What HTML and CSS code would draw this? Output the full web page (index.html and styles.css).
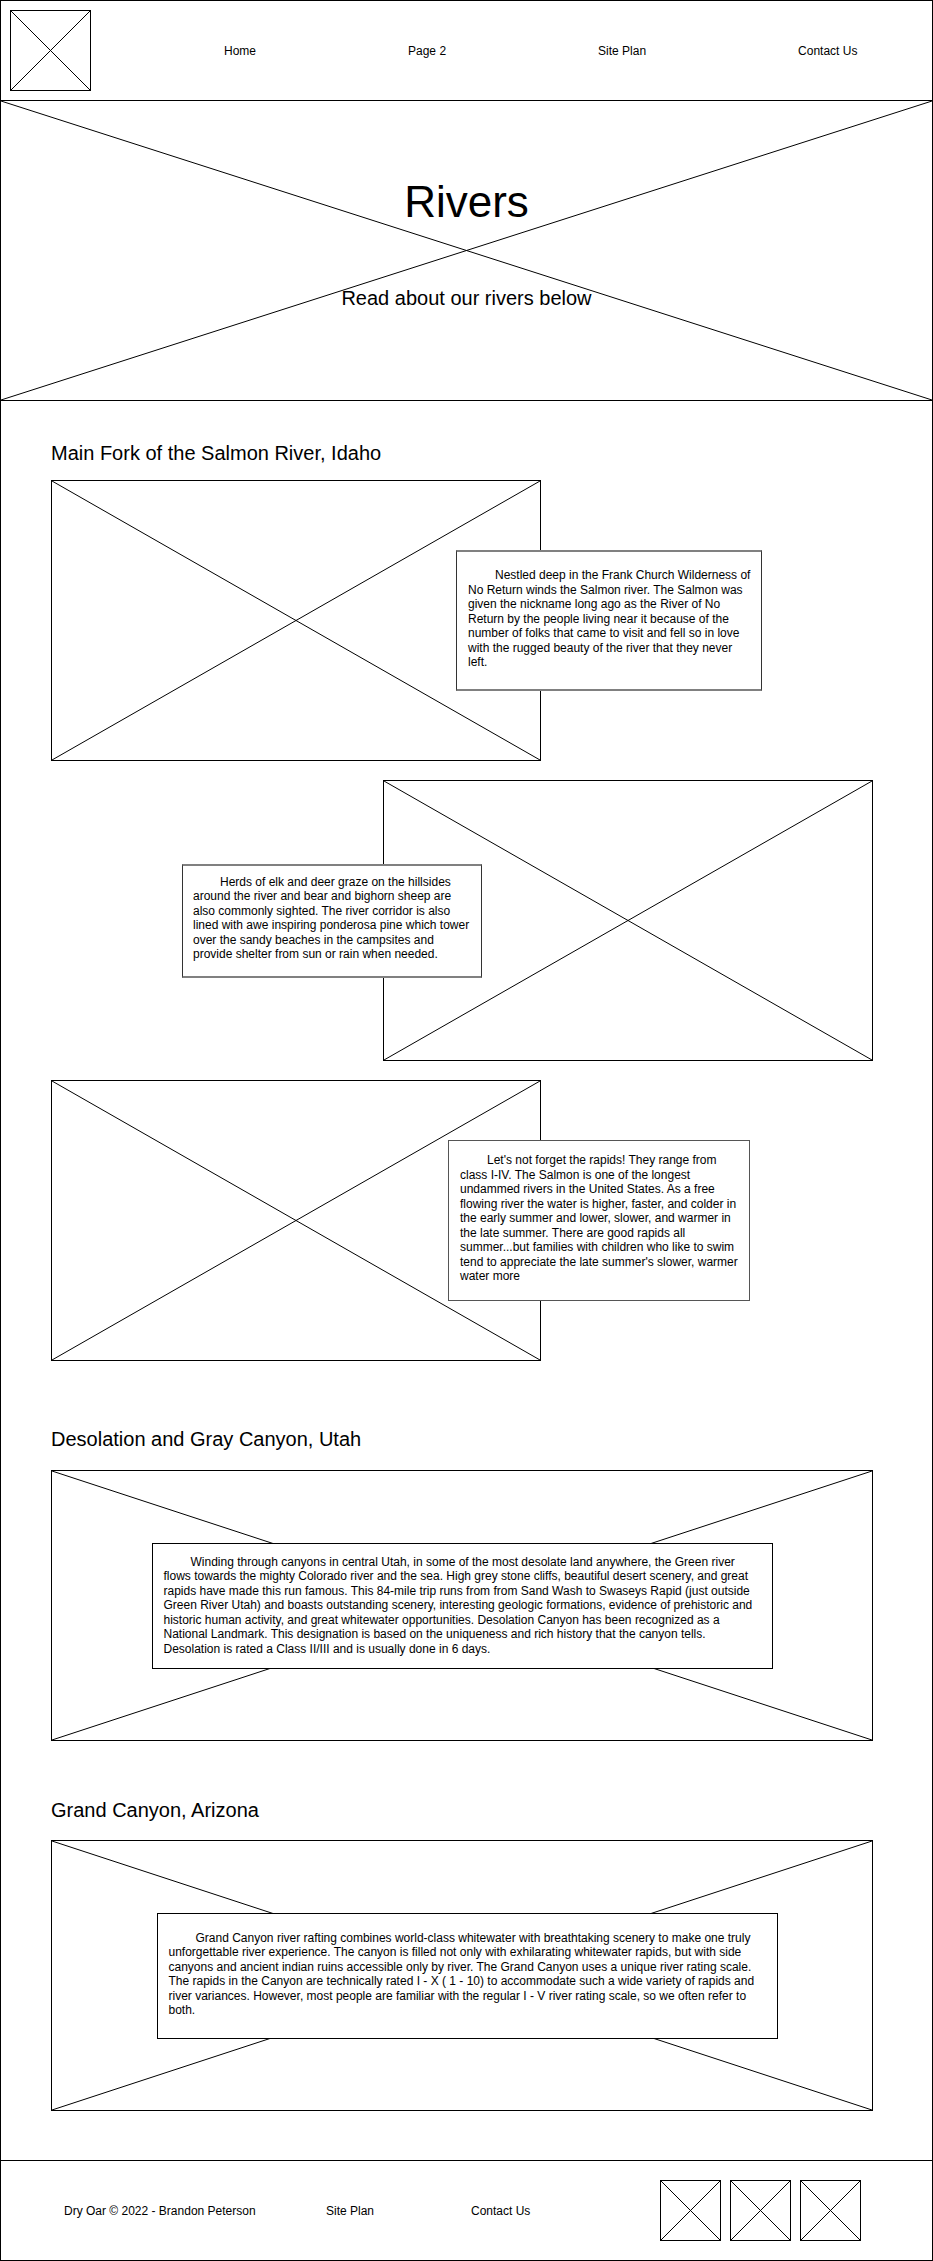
FILE: index.html
```html
<!DOCTYPE html>
<html lang="en">

<head>
  <meta charset="UTF-8">
  <title>Dry Oar - Rivers</title>
  <link rel="stylesheet" href="styles.css">
</head>

<body>
  <div class="page">

    <!-- header: logo + main menu -->
    <header class="site-header">
      <div class="ph logo">
        <svg class="x-lines" viewBox="0 0 100 100" preserveAspectRatio="none"><line x1="0" y1="0" x2="100" y2="100"/><line x1="100" y1="0" x2="0" y2="100"/></svg>
      </div>
      <nav class="main-nav">
        <a href="#">Home</a>
        <a href="#">Page 2</a>
        <a href="#">Site Plan</a>
        <a href="#">Contact Us</a>
      </nav>
    </header>

    <!-- hero banner -->
    <section class="hero">
      <svg class="x-lines" viewBox="0 0 100 100" preserveAspectRatio="none"><line x1="0" y1="0" x2="100" y2="100"/><line x1="100" y1="0" x2="0" y2="100"/></svg>
      <h1>Rivers</h1>
      <p>Read about our rivers below</p>
    </section>

    <main class="content">

      <!-- Salmon river -->
      <section class="river river-salmon">
        <h2>Main Fork of the Salmon River, Idaho</h2>

        <div class="feature">
          <div class="ph photo">
            <svg class="x-lines" viewBox="0 0 100 100" preserveAspectRatio="none"><line x1="0" y1="0" x2="100" y2="100"/><line x1="100" y1="0" x2="0" y2="100"/></svg>
          </div>
          <div class="note note-soft note-1">
            <p>Nestled deep in the Frank Church Wilderness of No Return winds the Salmon river. The Salmon was given the nickname long ago as the River of No Return by the people living near it because of the number of folks that came to visit and fell so in love with the rugged beauty of the river that they never left.</p>
          </div>
        </div>

        <div class="feature feature-flip">
          <div class="note note-soft note-2">
            <p>Herds of elk and deer graze on the hillsides around the river and bear and bighorn sheep are also commonly sighted. The river corridor is also lined with awe inspiring ponderosa pine which tower over the sandy beaches in the campsites and provide shelter from sun or rain when needed.</p>
          </div>
          <div class="ph photo">
            <svg class="x-lines" viewBox="0 0 100 100" preserveAspectRatio="none"><line x1="0" y1="0" x2="100" y2="100"/><line x1="100" y1="0" x2="0" y2="100"/></svg>
          </div>
        </div>

        <div class="feature">
          <div class="ph photo">
            <svg class="x-lines" viewBox="0 0 100 100" preserveAspectRatio="none"><line x1="0" y1="0" x2="100" y2="100"/><line x1="100" y1="0" x2="0" y2="100"/></svg>
          </div>
          <div class="note note-grey note-3">
            <p>Let's not forget the rapids! They range from class I-IV. The Salmon is one of the longest undammed rivers in the United States. As a free flowing river the water is higher, faster, and colder in the early summer and lower, slower, and warmer in the late summer. There are good rapids all summer...but families with children who like to swim tend to appreciate the late summer's slower, warmer water more</p>
          </div>
        </div>
      </section>

      <!-- Green river -->
      <section class="river river-desolation">
        <h2>Desolation and Gray Canyon, Utah</h2>
        <div class="ph banner">
          <svg class="x-lines" viewBox="0 0 100 100" preserveAspectRatio="none"><line x1="0" y1="0" x2="100" y2="100"/><line x1="100" y1="0" x2="0" y2="100"/></svg>
          <div class="note note-wide note-4">
            <p>Winding through canyons in central Utah, in some of the most desolate land anywhere, the Green river flows towards the mighty Colorado river and the sea. High grey stone cliffs, beautiful desert scenery, and great rapids have made this run famous. This 84-mile trip runs from from Sand Wash to Swaseys Rapid (just outside Green River Utah) and boasts outstanding scenery, interesting geologic formations, evidence of prehistoric and historic human activity, and great whitewater opportunities. Desolation Canyon has been recognized as a National Landmark. This designation is based on the uniqueness and rich history that the canyon tells. Desolation is rated a Class II/III and is usually done in 6 days.</p>
          </div>
        </div>
      </section>

      <!-- Colorado river -->
      <section class="river river-grand">
        <h2>Grand Canyon, Arizona</h2>
        <div class="ph banner">
          <svg class="x-lines" viewBox="0 0 100 100" preserveAspectRatio="none"><line x1="0" y1="0" x2="100" y2="100"/><line x1="100" y1="0" x2="0" y2="100"/></svg>
          <div class="note note-wide note-5">
            <p>Grand Canyon river rafting combines world-class whitewater with breathtaking scenery to make one truly unforgettable river experience. The canyon is filled not only with exhilarating whitewater rapids, but with side canyons and ancient indian ruins accessible only by river. The Grand Canyon uses a unique river rating scale. The rapids in the Canyon are technically rated I - X ( 1 - 10) to accommodate such a wide variety of rapids and river variances. However, most people are familiar with the regular I - V river rating scale, so we often refer to both.</p>
          </div>
        </div>
      </section>

    </main>

    <!-- footer -->
    <footer class="site-footer">
      <span>Dry Oar &copy; 2022 - Brandon Peterson</span>
      <a href="#">Site Plan</a>
      <a href="#">Contact Us</a>
      <div class="social">
        <div class="ph icon">
          <svg class="x-lines" viewBox="0 0 100 100" preserveAspectRatio="none"><line x1="0" y1="0" x2="100" y2="100"/><line x1="100" y1="0" x2="0" y2="100"/></svg>
        </div>
        <div class="ph icon">
          <svg class="x-lines" viewBox="0 0 100 100" preserveAspectRatio="none"><line x1="0" y1="0" x2="100" y2="100"/><line x1="100" y1="0" x2="0" y2="100"/></svg>
        </div>
        <div class="ph icon">
          <svg class="x-lines" viewBox="0 0 100 100" preserveAspectRatio="none"><line x1="0" y1="0" x2="100" y2="100"/><line x1="100" y1="0" x2="0" y2="100"/></svg>
        </div>
      </div>
    </footer>

  </div>
</body>

</html>
```

FILE: styles.css
```css
/* base */
html,
body {
  margin: 0;
  padding: 0;
  background-color: white;
  color: black;
  font-family: "Liberation Sans", Arial, sans-serif;
}

.page {
  box-sizing: border-box;
  width: 933px;
  height: 2261px;
  border: 1px solid black;
  display: flex;
  flex-direction: column;
}

a {
  color: black;
  text-decoration: none;
}

/* image placeholder (box with an X) */
.ph {
  position: relative;
  box-sizing: border-box;
  border: 1px solid black;
  background-color: white;
}

.x-lines {
  position: absolute;
  top: 0;
  left: 0;
  width: 100%;
  height: 100%;
}

.x-lines line {
  stroke: black;
  stroke-width: 1;
  vector-effect: non-scaling-stroke;
}

/* header */
.site-header {
  display: flex;
  align-items: center;
  padding: 9px;
  border-bottom: 1px solid black;
}

.logo {
  width: 81px;
  height: 81px;
  flex-shrink: 0;
}

.main-nav {
  display: flex;
  gap: 152px;
  margin-left: 133px;
  font-size: 12px;
}

/* hero */
.hero {
  position: relative;
  box-sizing: border-box;
  height: 300px;
  padding-top: 76px;
  border-bottom: 1px solid black;
  text-align: center;
}

.hero h1 {
  position: relative;
  margin: 0;
  font-size: 44px;
  font-weight: normal;
}

.hero p {
  position: relative;
  margin: 60px 0 0;
  font-size: 20px;
}

/* rivers */
.content {
  padding: 41px 59px 0 50px;
  flex: 1;
}

.river h2 {
  margin: 0 0 15px;
  font-size: 20px;
  font-weight: normal;
  line-height: 23px;
}

.river-desolation {
  margin-top: 67px;
}

.river-desolation h2 {
  margin-bottom: 19px;
}

.river-grand {
  margin-top: 58px;
}

.river-grand h2 {
  margin-bottom: 18px;
}

.feature {
  display: flex;
  align-items: center;
  margin-bottom: 19px;
}

.feature-flip {
  justify-content: flex-end;
}

.photo {
  width: 490px;
  height: 281px;
  flex-shrink: 0;
}

.banner {
  height: 271px;
  display: flex;
  align-items: center;
  justify-content: center;
}

/* text boxes over the pictures */
.note {
  position: relative;
  z-index: 1;
  box-sizing: border-box;
  flex-shrink: 0;
  border: 1px solid black;
  background-color: white;
  padding: 0 12px 0 11px;
  font-size: 12px;
  line-height: 14.5px;
}

.note p {
  margin: 0;
  text-indent: 27px;
}

.note-soft {
  border-color: #333;
  border-top: 2px solid #808080;
  border-bottom: 2px solid #808080;
}

.note-grey {
  border: 1px solid #555;
}

.note-1 {
  width: 306px;
  height: 141px;
  margin-left: -85px;
  padding-top: 16px;
  padding-right: 9px;
}

.note-2 {
  width: 300px;
  height: 114px;
  margin-right: -99px;
  padding-top: 9px;
  padding-left: 10px;
  padding-right: 9px;
}

.note-3 {
  width: 302px;
  height: 161px;
  margin-left: -93px;
  padding-top: 12px;
  padding-right: 8px;
}

.note-wide {
  width: 621px;
  height: 126px;
}

.note-4 {
  padding-top: 11px;
}

.note-5 {
  left: 5px;
  padding-top: 17px;
}

/* footer */
.site-footer {
  box-sizing: border-box;
  height: 100px;
  display: grid;
  grid-template-columns: 262px 145px 189px auto;
  align-items: center;
  padding-left: 63px;
  border-top: 1px solid black;
  font-size: 12px;
}

.social {
  display: flex;
  gap: 9px;
}

.icon {
  width: 61px;
  height: 61px;
}
```
